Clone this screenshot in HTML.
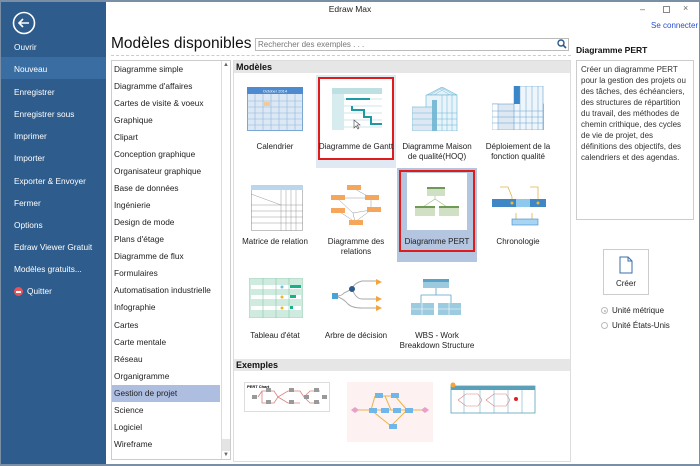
<!DOCTYPE html><html><head><meta charset="utf-8"><style>
*{margin:0;padding:0;box-sizing:border-box}
body{width:700px;height:466px;overflow:hidden;background:#fff;font-family:"Liberation Sans",sans-serif;font-size:8.5px;color:#222;position:relative}
.a{position:absolute}
#frame{left:0;top:0;width:700px;height:466px;border:1px solid #7a8fa6;border-top:2px solid #7a8fa6;border-bottom:2px solid #7a8fa6}
#side{left:1px;top:2px;width:105px;height:462px;background:#2e5c8c}
.si{position:absolute;left:14px;color:#fff;font-size:8.3px}
.cat{position:absolute;left:114px;font-size:8.3px;color:#222}
.lbl{position:absolute;text-align:center;width:84px;font-size:8px;line-height:10px;color:#222;white-space:nowrap}
.band{position:absolute;left:234px;width:336px;height:12px;background:#e6e6e6;font-weight:bold;font-size:9px;padding-left:2px;line-height:12px;color:#111}
</style></head><body>
<div class="a" id="side"></div>
<div class="a" style="left:1px;top:57px;width:105px;height:22px;background:#3a6ea3"></div>
<svg class="a" style="left:12px;top:11px" width="24" height="24"><circle cx="12" cy="12" r="10.5" fill="none" stroke="#fff" stroke-width="1.6"/><path d="M17 12H7M11 8l-4 4 4 4" fill="none" stroke="#fff" stroke-width="1.6"/></svg>
<div class="si" style="top:42px">Ouvrir</div>
<div class="si" style="top:64px">Nouveau</div>
<div class="si" style="top:87px">Enregistrer</div>
<div class="si" style="top:109px">Enregistrer sous</div>
<div class="si" style="top:131px">Imprimer</div>
<div class="si" style="top:153px">Importer</div>
<div class="si" style="top:176px">Exporter &amp; Envoyer</div>
<div class="si" style="top:198px">Fermer</div>
<div class="si" style="top:220px">Options</div>
<div class="si" style="top:242px">Edraw Viewer Gratuit</div>
<div class="si" style="top:264px">Modèles gratuits...</div>
<div class="a" style="left:14px;top:287px;width:9px;height:9px;border-radius:50%;background:#e8525a"><div style="position:absolute;left:2px;top:3.5px;width:5px;height:2px;background:#fff"></div></div>
<div class="si" style="top:286px;left:27px">Quitter</div>

<div class="a" style="left:0;top:4px;width:700px;text-align:center;font-size:8.5px">Edraw Max</div>
<div class="a" style="left:640px;top:4px;font-size:9px;color:#666">–</div>
<div class="a" style="left:663px;top:6px;width:7px;height:7px;border:1px solid #888"></div>
<div class="a" style="left:683px;top:3px;font-size:9px;color:#666">×</div>
<div class="a" style="left:651px;top:21px;font-size:8px;color:#2a4fd0">Se connecter</div>

<div class="a" style="left:111px;top:35px;font-size:15.5px;color:#111">Modèles disponibles</div>
<div class="a" style="left:111px;top:55px;width:460px;border-top:1px dashed #ccc"></div>
<div class="a" style="left:255px;top:38px;width:314px;height:13px;border:1px solid #bbb;font-size:8px;color:#777;padding-left:2px;line-height:11px">Rechercher des exemples . . .</div>
<svg class="a" style="left:557px;top:39px" width="10" height="10"><circle cx="4" cy="4" r="3" fill="none" stroke="#2a5a8a" stroke-width="1.4"/><path d="M6 6l3 3" stroke="#2a5a8a" stroke-width="1.6"/></svg>

<div class="a" style="left:111px;top:60px;width:120px;height:400px;border:1px solid #ccc"></div>
<div class="a" style="left:221px;top:61px;width:9px;height:398px;border-left:1px solid #ddd;background:#fff"></div>
<div class="a" style="left:222px;top:439px;width:8px;height:12px;background:#e4e4e4"></div>
<div class="a" style="left:223px;top:62px;font-size:6px;color:#666">▲</div>
<div class="a" style="left:223px;top:452px;font-size:6px;color:#666">▼</div>
<div class="a" style="left:112px;top:385px;width:108px;height:17px;background:#aebee0"></div>
<div class="cat" style="top:64px">Diagramme simple</div>
<div class="cat" style="top:81px">Diagramme d'affaires</div>
<div class="cat" style="top:98px">Cartes de visite &amp; voeux</div>
<div class="cat" style="top:115px">Graphique</div>
<div class="cat" style="top:132px">Clipart</div>
<div class="cat" style="top:149px">Conception graphique</div>
<div class="cat" style="top:166px">Organisateur graphique</div>
<div class="cat" style="top:183px">Base de données</div>
<div class="cat" style="top:200px">Ingénierie</div>
<div class="cat" style="top:217px">Design de mode</div>
<div class="cat" style="top:234px">Plans d'étage</div>
<div class="cat" style="top:251px">Diagramme de flux</div>
<div class="cat" style="top:268px">Formulaires</div>
<div class="cat" style="top:285px">Automatisation industrielle</div>
<div class="cat" style="top:302px">Infographie</div>
<div class="cat" style="top:320px">Cartes</div>
<div class="cat" style="top:337px">Carte mentale</div>
<div class="cat" style="top:354px">Réseau</div>
<div class="cat" style="top:371px">Organigramme</div>
<div class="cat" style="top:388px">Gestion de projet</div>
<div class="cat" style="top:405px">Science</div>
<div class="cat" style="top:422px">Logiciel</div>
<div class="cat" style="top:439px">Wireframe</div>

<div class="a" style="left:233px;top:60px;width:338px;height:402px;border:1px solid #ddd"></div>
<div class="band" style="top:61px">Modèles</div>
<div class="band" style="top:359px">Exemples</div>

<div class="a" style="left:316px;top:75px;width:80px;height:93px;background:#dfe8f3"></div>
<div class="a" style="left:318px;top:77px;width:76px;height:83px;border:2px solid #e01b1b;background:#fff"></div>
<div class="a" style="left:397px;top:168px;width:80px;height:94px;background:#b3c5df"></div>
<div class="a" style="left:399px;top:170px;width:76px;height:82px;border:2px solid #e01b1b;background:#b3c5df"></div>
<div class="a" style="left:407px;top:173px;width:60px;height:57px;background:#fff"></div>

<svg class="a" style="left:247px;top:87px" width="56" height="44"><rect x="0.5" y="0.5" width="55" height="43" fill="#dce9f5" stroke="#7aa6d2"/><rect x="0" y="0" width="56" height="7" fill="#4d8ad0"/><text x="28" y="5.5" font-size="4" fill="#fff" text-anchor="middle">October 2014</text><g stroke="#8fb4dc" stroke-width="0.6"><path d="M0 14H56M0 20H56M0 26H56M0 32H56M0 38H56M8 7V44M16 7V44M24 7V44M32 7V44M40 7V44M48 7V44"/></g><rect x="17" y="15" width="6" height="4" fill="#f4c99a"/></svg>
<svg class="a" style="left:330px;top:86px" width="54" height="46"><rect x="0" y="0" width="54" height="46" fill="#fff"/><rect x="2" y="2" width="50" height="6" fill="#bfe0e2"/><g stroke="#cfe6e8" stroke-width="1"><path d="M2 13H52M2 20H52M2 27H52M2 34H52M2 41H52"/></g><rect x="2" y="8" width="12" height="36" fill="#d7ecee"/><path d="M16 13H40M22 20V24H34V31H41V38H52" stroke="#1f9aa3" stroke-width="2" fill="none"/><path d="M24 34l0 8 2-2 2 3 1-1-2-3h3z" fill="#fff" stroke="#444" stroke-width="0.6"/></svg>
<svg class="a" style="left:412px;top:87px" width="52" height="44"><path d="M15 8L30 0 45 8Z" fill="#e5f1f8" stroke="#67b4d6" stroke-width="0.6"/><path d="M18 8l12-7 12 7M22 8l10-6M38 8l-10-6" stroke="#67b4d6" stroke-width="0.4" fill="none"/><rect x="14" y="8" width="31" height="36" fill="#e8f3fa" stroke="#67b4d6" stroke-width="0.6"/><rect x="0" y="20" width="22" height="24" fill="#dde8f3" stroke="#67b4d6" stroke-width="0.6"/><rect x="20" y="13" width="5" height="31" fill="#7bbbd6"/><g stroke="#67b4d6" stroke-width="0.5"><path d="M0 26H45M0 32H45M0 38H45M30 8V44M35 8V44M40 8V44"/></g></svg>
<svg class="a" style="left:492px;top:86px" width="52" height="44"><rect x="0.5" y="18" width="51" height="26" fill="#dde8f3" stroke="#67a0d0" stroke-width="0.6"/><rect x="22" y="0" width="29" height="44" fill="#eef5fb" stroke="#67a0d0" stroke-width="0.6"/><rect x="22" y="0" width="6" height="18" fill="#3b86c8"/><rect x="0" y="18" width="6" height="26" fill="#fff" stroke="#67a0d0" stroke-width="0.5"/><g stroke="#67a0d0" stroke-width="0.5"><path d="M0 25H51M0 31H51M0 37H51M28 0V44M34 0V44M40 0V44M46 0V44"/></g></svg>
<div class="lbl" style="left:233px;top:142px">Calendrier</div>
<div class="lbl" style="left:314px;top:142px">Diagramme de Gantt</div>
<div class="lbl" style="left:395px;top:142px">Diagramme Maison<br>de qualité(HOQ)</div>
<div class="lbl" style="left:476px;top:142px">Déploiement de la<br>fonction qualité</div>

<svg class="a" style="left:251px;top:185px" width="52" height="46"><rect x="0.5" y="0.5" width="51" height="45" fill="#fff" stroke="#999" stroke-width="0.6"/><rect x="0" y="0" width="52" height="5" fill="#b9d6ec"/><path d="M0 9L30 20M0 20H52M0 26H52M0 32H52M0 38H52M30 5V46M35 5V46M40 5V46M45 5V46" stroke="#999" stroke-width="0.5"/></svg>
<svg class="a" style="left:331px;top:184px" width="52" height="48"><g stroke="#999" stroke-width="0.5" fill="none"><path d="M22 4L40 14M6 14L40 14M6 14L22 29M40 14L40 26M22 29L40 26M22 29L24 38M6 26L24 38M40 26L24 38"/></g><g fill="#f5a65b"><rect x="16" y="1" width="14" height="5"/><rect x="0" y="11" width="14" height="5"/><rect x="34" y="11" width="14" height="5"/><rect x="0" y="24" width="14" height="5"/><rect x="36" y="23" width="14" height="5"/><rect x="18" y="36" width="14" height="5"/></g></svg>
<svg class="a" style="left:415px;top:187px" width="44" height="36"><path d="M20 6V12M20 12L8 20M20 12L32 20" stroke="#9cb88a" stroke-width="0.6" fill="none"/><rect x="12" y="0" width="18" height="9" fill="#cfe0c4"/><rect x="12" y="0" width="18" height="2" fill="#6e9a55"/><rect x="0" y="19" width="20" height="10" fill="#cfe0c4"/><rect x="0" y="19" width="20" height="2" fill="#6e9a55"/><rect x="24" y="19" width="20" height="10" fill="#cfe0c4"/><rect x="24" y="19" width="20" height="2" fill="#6e9a55"/></svg>
<svg class="a" style="left:492px;top:185px" width="54" height="46"><path d="M8 2H16L20 12V22M38 2H46L46 6V22M24 34V28M40 34V28" stroke="#e4b24a" stroke-width="0.8" fill="none"/><rect x="0" y="14" width="54" height="8" fill="#3e86c6"/><rect x="24" y="14" width="14" height="8" fill="#8ec8ec"/><rect x="20" y="34" width="26" height="6" fill="#a8d6f2" stroke="#3e86c6" stroke-width="0.6"/><circle cx="20" cy="18" r="1.5" fill="#f2b92a"/><circle cx="46" cy="18" r="1.5" fill="#f2b92a"/></svg>
<div class="lbl" style="left:233px;top:237px">Matrice de relation</div>
<div class="lbl" style="left:314px;top:237px">Diagramme des<br>relations</div>
<div class="lbl" style="left:395px;top:237px">Diagramme PERT</div>
<div class="lbl" style="left:476px;top:237px">Chronologie</div>

<svg class="a" style="left:249px;top:278px" width="54" height="40"><rect x="0" y="0" width="54" height="40" fill="#cfeade" stroke="#8cc9ac" stroke-width="0.6"/><g fill="#fff"><rect x="2" y="7" width="50" height="4"/><rect x="2" y="17" width="50" height="4"/><rect x="2" y="28" width="50" height="4"/></g><path d="M14 0V40M27 0V40M40 0V40" stroke="#8cc9ac" stroke-width="0.6"/><rect x="41" y="7" width="11" height="3" fill="#17b28a"/><rect x="41" y="17" width="6" height="3" fill="#17b28a"/><rect x="41" y="28" width="3" height="3" fill="#17b28a"/><circle cx="33" cy="19" r="1.5" fill="#f3b22a"/><circle cx="33" cy="30" r="1.5" fill="#f3b22a"/><circle cx="33" cy="9" r="1.5" fill="#6ec0e0"/></svg>
<svg class="a" style="left:332px;top:279px" width="52" height="38"><path d="M4 17Q10 17 12 14L20 10Q22 4 30 2H45M20 10Q24 20 30 20H45M4 17Q12 20 16 25Q20 29 30 29H45" stroke="#aaa" stroke-width="1" fill="none"/><rect x="0" y="14" width="6" height="6" fill="#4aa3d6"/><circle cx="20" cy="10" r="3" fill="#2e5a8c"/><path d="M44 0l6 3-6 3z M44 17l6 3-6 3z M44 26l6 3-6 3z" fill="#f3a43a"/></svg>
<svg class="a" style="left:411px;top:279px" width="52" height="38"><rect x="12" y="0" width="26" height="9" fill="#9ccbe0"/><rect x="12" y="0" width="26" height="3" fill="#5aa3c6"/><path d="M25 9V16M10 16H40M10 16V24M40 16V24" stroke="#5aa3c6" stroke-width="0.8" fill="none"/><rect x="0" y="24" width="23" height="12" fill="#9ccbe0"/><rect x="27" y="24" width="23" height="12" fill="#9ccbe0"/><path d="M0 30H50M11 24V36M38 24V36" stroke="#fff" stroke-width="0.6"/></svg>
<div class="lbl" style="left:233px;top:331px">Tableau d'état</div>
<div class="lbl" style="left:314px;top:331px">Arbre de décision</div>
<div class="lbl" style="left:395px;top:331px">WBS - Work<br>Breakdown Structure</div>

<svg class="a" style="left:244px;top:382px" width="86" height="30"><rect x="0.5" y="0.5" width="85" height="29" fill="#fff" stroke="#ddd"/><text x="3" y="6" font-size="4" font-weight="bold">PERT Chart</text><path d="M14 15L18 9H30L34 15L44 9H56L60 15L66 9H76M18 9V21H30L34 15M56 21H44L34 15M60 15L66 21H76" stroke="#d98080" stroke-width="0.8" fill="none"/><g fill="#999"><rect x="8" y="13" width="5" height="4"/><rect x="22" y="6" width="5" height="4"/><rect x="22" y="18" width="5" height="4"/><rect x="45" y="6" width="5" height="4"/><rect x="45" y="18" width="5" height="4"/><rect x="60" y="13" width="5" height="4"/><rect x="70" y="6" width="5" height="4"/><rect x="70" y="18" width="5" height="4"/><rect x="78" y="13" width="5" height="4"/></g></svg>
<svg class="a" style="left:347px;top:382px" width="86" height="60"><rect width="86" height="60" fill="#fdf1f1"/><path d="M8 28H78M28 14L24 28L44 28L38 14M60 28L44 44L24 28M28 14H48L60 28" stroke="#e8b44a" stroke-width="1" fill="none"/><g fill="#6fb6ea"><rect x="28" y="11" width="8" height="5"/><rect x="44" y="11" width="8" height="5"/><rect x="22" y="26" width="8" height="5"/><rect x="34" y="26" width="8" height="5"/><rect x="46" y="26" width="8" height="5"/><rect x="58" y="26" width="8" height="5"/><rect x="42" y="42" width="8" height="5"/></g><path d="M4 28l4-3 4 3-4 3zM74 28l4-3 4 3-4 3z" fill="#e8a0c8"/></svg>
<svg class="a" style="left:450px;top:382px" width="86" height="32"><rect x="1" y="4" width="84" height="27" fill="#fff" stroke="#5aa0b8" stroke-width="0.8"/><rect x="1" y="4" width="84" height="4" fill="#5aa0b8"/><path d="M14 8V31M30 8V31M44 8V31M58 8V31M72 8V31" stroke="#5aa0b8" stroke-width="0.5"/><path d="M8 18L16 12H28L32 18L28 24H16ZM36 18L44 12H56L60 18L56 24H44Z" stroke="#d98080" stroke-width="0.6" fill="none"/><circle cx="3" cy="3" r="2.5" fill="#f3a43a"/><circle cx="66" cy="17" r="2" fill="#e02020"/></svg>

<div class="a" style="left:576px;top:45px;font-size:8.5px;font-weight:bold;color:#111">Diagramme PERT</div>
<div class="a" style="left:576px;top:60px;width:118px;height:160px;border:1px solid #ccc;padding:3px 4px;font-size:8px;line-height:11px;color:#333">Créer un diagramme PERT pour la gestion des projets ou des tâches, des échéanciers, des structures de répartition du travail, des méthodes de chemin crithique, des cycles de vie de projet, des définitions des objectifs, des calendriers et des agendas.</div>
<div class="a" style="left:603px;top:249px;width:46px;height:46px;border:1px solid #ccc"></div>
<svg class="a" style="left:619px;top:256px" width="14" height="18"><path d="M1 1H9L13 5V17H1Z M9 1V5H13" fill="none" stroke="#3b6ea8" stroke-width="1"/></svg>
<div class="a" style="left:603px;top:279px;width:46px;text-align:center;font-size:8px">Créer</div>
<div class="a" style="left:601px;top:307px;width:7px;height:7px;border:1px solid #bbb;border-radius:50%"><div style="margin:1.5px;width:2px;height:2px;background:#bbb;border-radius:50%"></div></div>
<div class="a" style="left:612px;top:306px;font-size:8px">Unité métrique</div>
<div class="a" style="left:601px;top:322px;width:7px;height:7px;border:1px solid #bbb;border-radius:50%"></div>
<div class="a" style="left:612px;top:321px;font-size:8px">Unité États-Unis</div>

<div class="a" id="frame"></div>
</body></html>
